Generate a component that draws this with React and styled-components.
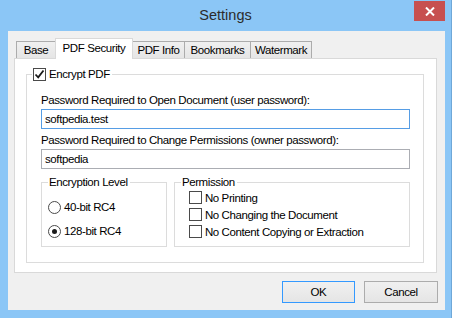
import React from 'react';
import styled, { createGlobalStyle } from 'styled-components';

const GlobalStyle = createGlobalStyle`
  html, body {
    margin: 0;
    padding: 0;
    background: #8bc6f6;
  }
  body {
    font-family: "Liberation Sans", Arial, sans-serif;
    font-size: 11.5px;
    letter-spacing: -0.4px;
    color: #000;
  }
`;

const Window = styled.div`
  width: 452px;
  height: 318px;
  box-sizing: border-box;
  background: #8bc6f6;
  border-right: 1px solid #6fa8d8;
  display: flex;
  flex-direction: column;
`;

const TitleBar = styled.div`
  height: 31px;
  display: grid;
  grid-template-columns: 1fr auto 1fr;
`;

const Title = styled.div`
  grid-column: 2;
  align-self: center;
  font-size: 14.5px;
  letter-spacing: 0;
  color: #2b2b2b;
  padding-bottom: 1px;
`;

const CloseButton = styled.div`
  grid-column: 3;
  justify-self: end;
  margin-top: 1px;
  margin-right: 6px;
  width: 31px;
  height: 20px;
  background: #c75050;
  display: flex;
  align-items: center;
  justify-content: center;
`;

const Client = styled.div`
  margin: 0 6px 0 8px;
  height: 279px;
  background: #f0f0f0;
  display: flex;
  flex-direction: column;
  padding-top: 7px;
  box-sizing: border-box;
`;

const TabStrip = styled.div`
  display: flex;
  align-items: flex-end;
  margin-left: 8px;
  height: 20px;
  position: relative;
  z-index: 1;
`;

const Tab = styled.div`
  box-sizing: border-box;
  width: ${p => p.$w}px;
  height: ${p => (p.$active ? 21 : 17)}px;
  margin-left: ${p => (p.$first ? 0 : -1)}px;
  margin-bottom: ${p => (p.$active ? -1 : 0)}px;
  border: 1px solid ${p => (p.$active ? '#d9d9d9' : '#acacac')};
  border-bottom: none;
  background: ${p => (p.$active ? '#fff' : 'linear-gradient(#f0f0f0, #e5e5e5)')};
  display: flex;
  align-items: center;
  justify-content: center;
  padding-bottom: ${p => (p.$active ? 2 : 0)}px;
  position: relative;
  z-index: ${p => (p.$active ? 2 : 1)};
  white-space: nowrap;
`;

const Panel = styled.div`
  margin: 0 8px 0 6px;
  height: 215px;
  box-sizing: border-box;
  background: #fff;
  border: 1px solid #d9d9d9;
  padding: 8px 12px 0 11px;
`;

const Group = styled.fieldset`
  margin: 0;
  padding: 0;
  min-width: 0;
  box-sizing: border-box;
  border: 1px solid #dcdcdc;
  width: ${p => p.$w || 'auto'};
  height: ${p => p.$h}px;
`;

const Legend = styled.legend`
  margin-left: ${p => p.$ml}px;
  padding: 0 2px 0 1px;
  line-height: 14px;
  height: 14px;
  display: flex;
  align-items: center;
  gap: 3px;
  white-space: nowrap;
`;

const GroupBody = styled.div`
  padding: 12px 13px 0 14px;
`;

const FieldLabel = styled.div`
  line-height: 15px;
  margin-top: ${p => p.$mt || 0}px;
  margin-bottom: 1px;
  white-space: nowrap;
`;

const TextInput = styled.div`
  height: 20px;
  box-sizing: border-box;
  border: 1px solid ${p => (p.$focused ? '#569de5' : '#abadb3')};
  background: #fff;
  display: flex;
  align-items: center;
  padding-left: 3px;
`;

const SubGroups = styled.div`
  display: flex;
  gap: 7px;
  margin-top: 6px;
`;

const OptionList = styled.div`
  padding: ${p => p.$pad};
  display: flex;
  flex-direction: column;
`;

const Option = styled.div`
  height: ${p => p.$h}px;
  display: flex;
  align-items: center;
  gap: 3px;
  white-space: nowrap;
`;

const Box = styled.span`
  width: 13px;
  height: 13px;
  box-sizing: border-box;
  border: 1px solid #4a4a4a;
  background: #fff;
  display: inline-flex;
  align-items: center;
  justify-content: center;
  flex: none;
`;

const Radio = styled.span`
  width: 13px;
  height: 13px;
  box-sizing: border-box;
  border: 1px solid #4a4a4a;
  border-radius: 50%;
  background: #fff;
  display: inline-flex;
  align-items: center;
  justify-content: center;
  flex: none;

  &::after {
    content: '';
    display: ${p => (p.$on ? 'block' : 'none')};
    width: 5px;
    height: 5px;
    border-radius: 50%;
    background: #1a1a1a;
  }
`;

const ButtonRow = styled.div`
  display: flex;
  justify-content: flex-end;
  gap: 9px;
  margin-top: 8px;
  padding-right: 7px;
`;

const Button = styled.div`
  width: ${p => p.$w}px;
  height: 22px;
  box-sizing: border-box;
  border: 1px solid ${p => (p.$default ? '#3399ff' : '#acacac')};
  background: linear-gradient(#f0f0f0, #e5e5e5);
  display: flex;
  align-items: center;
  justify-content: center;
`;

function CheckBox({ checked }) {
  return (
    <Box>
      {checked && (
        <svg width="11" height="11" viewBox="0 0 11 11">
          <path d="M1.5 5.5 L4.2 8.3 L9.5 1.5" fill="none" stroke="#1a1a1a" strokeWidth="1.8" />
        </svg>
      )}
    </Box>
  );
}

const tabs = [
  { label: 'Base', w: 40 },
  { label: 'PDF Security', w: 78, active: true },
  { label: 'PDF Info', w: 53 },
  { label: 'Bookmarks', w: 67 },
  { label: 'Watermark', w: 62 },
];

const permissions = ['No Printing', 'No Changing the Document', 'No Content Copying or Extraction'];

export default function App() {
  return (
    <>
      <GlobalStyle />
      <Window>
        <TitleBar>
          <Title>Settings</Title>
          <CloseButton>
            <svg width="10" height="9" viewBox="0 0 10 9">
              <path d="M1 0.5 L9 8.5 M9 0.5 L1 8.5" stroke="#fff" strokeWidth="2" />
            </svg>
          </CloseButton>
        </TitleBar>
        <Client>
          <TabStrip>
            {tabs.map((t, i) => (
              <Tab key={t.label} $w={t.w} $active={t.active} $first={i === 0}>
                {t.label}
              </Tab>
            ))}
          </TabStrip>
          <Panel>
            <Group $h={196}>
              <Legend $ml={5}>
                <CheckBox checked />
                Encrypt PDF
              </Legend>
              <GroupBody>
                <FieldLabel>Password Required to Open Document (user password):</FieldLabel>
                <TextInput $focused>softpedia.test</TextInput>
                <FieldLabel $mt={4}>Password Required to Change Permissions (owner password):</FieldLabel>
                <TextInput>softpedia</TextInput>
                <SubGroups>
                  <Group $w="128px" $h={72}>
                    <Legend $ml={6}>Encryption Level</Legend>
                    <OptionList $pad="6px 0 0 6px">
                      <Option $h={24}>
                        <Radio />
                        40-bit RC4
                      </Option>
                      <Option $h={24}>
                        <Radio $on />
                        128-bit RC4
                      </Option>
                    </OptionList>
                  </Group>
                  <Group $w="240px" $h={72}>
                    <Legend $ml={6}>Permission</Legend>
                    <OptionList $pad="0 0 0 14px">
                      {permissions.map(p => (
                        <Option key={p} $h={17}>
                          <CheckBox />
                          {p}
                        </Option>
                      ))}
                    </OptionList>
                  </Group>
                </SubGroups>
              </GroupBody>
            </Group>
          </Panel>
          <ButtonRow>
            <Button $w={73} $default>OK</Button>
            <Button $w={74}>Cancel</Button>
          </ButtonRow>
        </Client>
      </Window>
    </>
  );
}
